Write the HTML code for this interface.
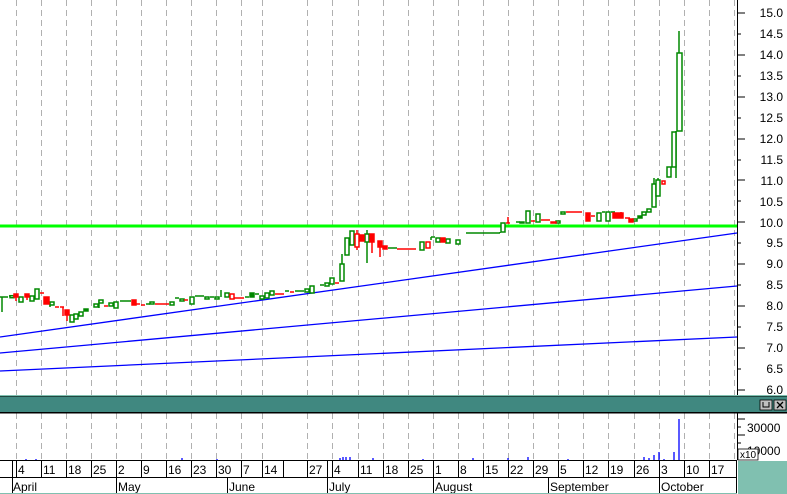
<!DOCTYPE html>
<html><head><meta charset="utf-8"><style>
html,body{margin:0;padding:0;background:#fff;width:787px;height:494px;overflow:hidden;font-family:"Liberation Sans",Arial,sans-serif}
svg{position:absolute;left:0;top:0}
text{font-family:"Liberation Sans",Arial,sans-serif}
</style></head><body>
<svg width="787" height="494" viewBox="0 0 787 494" xmlns="http://www.w3.org/2000/svg">
<rect width="787" height="494" fill="#fff"/>
<g stroke="#b0b0b0" stroke-dasharray="6,4" stroke-width="1">
<path d="M16.5 0V395M41.5 0V395M66.5 0V395M91.5 0V395M116.5 0V395M141.5 0V395M166.5 0V395M191.5 0V395M216.5 0V395M241.5 0V395M262.5 0V395M307.5 0V395M332.5 0V395M358.5 0V395M383.5 0V395M408.5 0V395M433.5 0V395M458.5 0V395M483.5 0V395M508.5 0V395M533.5 0V395M558.5 0V395M583.5 0V395M608.5 0V395M634.5 0V395M659.5 0V395M684.5 0V395M709.5 0V395M734.5 0V395"/>
<path d="M16.5 413V460M41.5 413V460M66.5 413V460M91.5 413V460M116.5 413V460M141.5 413V460M166.5 413V460M191.5 413V460M216.5 413V460M241.5 413V460M262.5 413V460M307.5 413V460M332.5 413V460M358.5 413V460M383.5 413V460M408.5 413V460M433.5 413V460M458.5 413V460M483.5 413V460M508.5 413V460M533.5 413V460M558.5 413V460M583.5 413V460M608.5 413V460M634.5 413V460M659.5 413V460M684.5 413V460M709.5 413V460M734.5 413V460"/>
</g>
<g stroke="#0000ff" stroke-width="1.3">
<line x1="0" y1="337" x2="737" y2="233"/>
<line x1="0" y1="353" x2="737" y2="286"/>
<line x1="0" y1="371" x2="737" y2="337"/>
</g>
<line x1="0" y1="226" x2="737" y2="226" stroke="#00ff00" stroke-width="3"/>
<g stroke="#008800" stroke-width="1.5" fill="#fff">
<path d="M2 297V312M0 297H8M9 296H13M38 290V299M50 304V307M99 300V308M120 301H131M146 304H150M175 298H179M195 296H200M200 296H204M210 297H214M221 290V297M245 297H249M255 294H259M285 291H289M295 291H304M320 285H324M342 254V264M388 248H397M431 237V240M431 237H435M466 233H500M500 233V232M516 222H520M602 212H605M611 212H615M676 131V178M679 31V53M654 178V184M658 178V180"/>
<rect x="10" y="295.7" width="4" height="2"/>
<rect x="19" y="297" width="4" height="5"/>
<rect x="30" y="296" width="4" height="5"/>
<rect x="35" y="289" width="4" height="10"/>
<rect x="50" y="302" width="4" height="3"/>
<rect x="70" y="315" width="4" height="7"/>
<rect x="74" y="314" width="4" height="5"/>
<rect x="79" y="312" width="4" height="4"/>
<rect x="84" y="309" width="4" height="2" fill="#008800"/>
<rect x="94" y="304" width="4" height="3"/>
<rect x="99" y="300" width="4" height="3"/>
<rect x="109" y="303" width="4" height="3"/>
<rect x="114" y="302" width="4" height="6"/>
<rect x="150" y="302" width="4" height="2"/>
<rect x="170" y="302" width="4" height="3"/>
<rect x="180" y="299" width="4" height="2"/>
<rect x="190" y="297" width="4" height="7"/>
<rect x="205" y="297" width="4" height="2"/>
<rect x="215" y="297" width="4" height="2"/>
<rect x="225" y="293" width="4" height="4"/>
<rect x="250" y="293" width="4" height="4" fill="#008800"/>
<rect x="260" y="296" width="4" height="3"/>
<rect x="265" y="293" width="4" height="5"/>
<rect x="270" y="291" width="4" height="4"/>
<rect x="305" y="289" width="4" height="3"/>
<rect x="310" y="286" width="4" height="7"/>
<rect x="325" y="283" width="4" height="3"/>
<rect x="330" y="278" width="4" height="6"/>
<rect x="340" y="264" width="4" height="17"/>
<rect x="345" y="238" width="4" height="17"/>
<rect x="350" y="231" width="4" height="14"/>
<path d="M367 230V263"/>
<rect x="365" y="234" width="4" height="8"/>
<rect x="420" y="242" width="4" height="8"/>
<rect x="436" y="238" width="4" height="4"/>
<rect x="446" y="239" width="4" height="4"/>
<rect x="456" y="240" width="4" height="4"/>
<rect x="501" y="223" width="4" height="9"/>
<rect x="520" y="222" width="4" height="1"/>
<rect x="526" y="211" width="4" height="12"/>
<rect x="536" y="214" width="4" height="8"/>
<rect x="556" y="221" width="4" height="2"/>
<rect x="561" y="212" width="4" height="2"/>
<rect x="597" y="213" width="4" height="8"/>
<rect x="606" y="212" width="4" height="9"/>
<rect x="633" y="219" width="4" height="2"/>
<rect x="638" y="216" width="4" height="2" fill="#008800"/>
<rect x="642" y="212" width="4" height="3"/>
<rect x="647" y="209" width="4" height="3"/>
<rect x="652" y="184" width="4" height="23"/>
<rect x="656" y="180" width="4" height="16"/>
<rect x="667" y="167" width="4" height="10"/>
<rect x="672" y="132" width="4" height="35"/>
<rect x="677" y="53" width="5" height="78"/>
</g>
<g stroke="#ff0000" stroke-width="1.5" fill="#ff0000">
<path d="M16 297V301M27 297V300M40 293H44M55 307H59M60 307H64M63 307V316M67 315V321M104 306H108M136 304H140M141 305H145M155 304H169M184 300H188M234 298H244M275 294H284M290 292H294M335 283H339M357 230V250M372 242V253M380 247V257M397 249H416M506 223H510M508 217V223M531 221H535M541 220H550M566 212H582M591 216H595M625 218H630M621 212V217"/>
<rect x="14" y="294" width="4" height="3"/>
<rect x="25" y="294" width="4" height="3"/>
<rect x="44" y="297" width="5" height="7"/>
<rect x="65" y="310" width="4" height="5"/>
<rect x="132" y="300" width="4" height="5"/>
<rect x="230" y="294" width="4" height="5" fill="#fff"/>
<rect x="355" y="234" width="4" height="13" fill="#fff"/>
<rect x="360" y="235" width="4" height="6"/>
<rect x="370" y="234" width="4" height="8"/>
<rect x="378" y="241" width="4" height="6"/>
<rect x="383" y="246" width="4" height="3"/>
<rect x="426" y="242" width="4" height="6" fill="#fff"/>
<rect x="441" y="238" width="4" height="4"/>
<rect x="551" y="222" width="5" height="1"/>
<rect x="586" y="213" width="4" height="8"/>
<rect x="613" y="213" width="10" height="5"/>
<rect x="629" y="219" width="4" height="3"/>
<rect x="662" y="181" width="3" height="3" fill="#fff"/>
</g>
<line x1="737.5" y1="0" x2="737.5" y2="395" stroke="#000"/>
<g stroke="#000"><path d="M737 13H745M737 34H741M737 55H745M737 76H741M737 97H745M737 118H741M737 139H745M737 160H741M737 180H745M737 201H741M737 222H745M737 243H741M737 264H745M737 285H741M737 306H745M737 327H741M737 348H745M737 369H741M737 390H745"/></g>
<g font-size="12" fill="#000" text-anchor="end">
<text x="783" y="17">15.0</text><text x="783" y="38">14.5</text><text x="783" y="59">14.0</text><text x="783" y="80">13.5</text><text x="783" y="101">13.0</text><text x="783" y="122">12.5</text><text x="783" y="143">12.0</text><text x="783" y="164">11.5</text><text x="783" y="185">11.0</text><text x="783" y="206">10.5</text><text x="783" y="227">10.0</text><text x="783" y="268">9.0</text><text x="783" y="247">9.5</text><text x="783" y="289">8.5</text><text x="783" y="310">8.0</text><text x="783" y="331">7.5</text><text x="783" y="352">7.0</text><text x="783" y="373">6.5</text><text x="783" y="394">6.0</text>
</g>
<rect x="0" y="395" width="787" height="2" fill="#80c0b0"/>
<rect x="0" y="396" width="787" height="1" fill="#204840"/>
<rect x="0" y="397" width="787" height="15" fill="#408880"/>
<rect x="0" y="412" width="787" height="1.5" fill="#000"/>
<g>
<rect x="760" y="400" width="12" height="10" fill="#c0c0c0" stroke="#000" stroke-width="0.8"/>
<path d="M763 402V407H769V402" stroke="#000" fill="none"/>
<rect x="774" y="400" width="12" height="10" fill="#c0c0c0" stroke="#000" stroke-width="0.8"/>
<path d="M777 402L783 408M783 402L777 408" stroke="#000" stroke-width="1.3"/>
</g>
<g stroke="#0000ff" stroke-width="1.3">
<path d="M26 460V459M36 460V459M182 460V458M217 460V459M340 460V458M343 460V457M346 460V457M350 460V457M373 460V458M423 460V459M473 460V458M508 460V458M528 460V457M568 460V459M644 460V457M649 460V458M654 460V455M659 460V452M664 460V459M674 460V452M679 460V419"/>
</g>
<line x1="737.5" y1="413" x2="737.5" y2="460" stroke="#000"/>
<g stroke="#000"><path d="M737 419H745M737 427H741M737 435H745M737 443H741M737 451H745"/></g>
<g font-size="12" fill="#000"><text x="747" y="432">30000</text><text x="747" y="455">10000</text></g>
<rect x="738" y="449" width="20" height="11" fill="#fff" stroke="#000" stroke-width="0.8"/>
<text x="740" y="458" font-size="10" fill="#000">x10</text>
<rect x="0" y="460" width="737" height="34" fill="#fff"/>
<line x1="0" y1="460.5" x2="737" y2="460.5" stroke="#000"/>
<line x1="0" y1="477.5" x2="737" y2="477.5" stroke="#000"/>
<g stroke="#000"><path d="M12.5 460V494M16.5 460V477M41.5 460V477M66.5 460V477M91.5 460V477M116.5 460V494M141.5 460V477M166.5 460V477M191.5 460V477M216.5 460V477M241.5 460V477M262.5 460V477M283.5 460V477M307.5 460V477M327.5 460V494M332.5 460V477M358.5 460V477M383.5 460V477M408.5 460V477M433.5 460V494M458.5 460V477M483.5 460V477M508.5 460V477M533.5 460V477M548.5 477V494M558.5 460V477M583.5 460V477M608.5 460V477M634.5 460V477M659.5 460V494M684.5 460V477M709.5 460V477M736.5 460V494M227.5 477V494"/></g>
<g font-size="12" fill="#000">
<text x="18" y="474">4</text><text x="43" y="474">11</text><text x="68" y="474">18</text><text x="93" y="474">25</text><text x="118" y="474">2</text><text x="143" y="474">9</text><text x="168" y="474">16</text><text x="193" y="474">23</text><text x="218" y="474">30</text><text x="243" y="474">7</text><text x="264" y="474">14</text><text x="309" y="474">27</text><text x="334" y="474">4</text><text x="360" y="474">11</text><text x="385" y="474">18</text><text x="410" y="474">25</text><text x="435" y="474">1</text><text x="460" y="474">8</text><text x="485" y="474">15</text><text x="510" y="474">22</text><text x="535" y="474">29</text><text x="560" y="474">5</text><text x="585" y="474">12</text><text x="610" y="474">19</text><text x="636" y="474">26</text><text x="661" y="474">3</text><text x="686" y="474">10</text><text x="711" y="474">17</text>
<text x="13" y="491">April</text><text x="118" y="491">May</text><text x="229" y="491">June</text><text x="329" y="491">July</text><text x="435" y="491">August</text><text x="550" y="491">September</text><text x="661" y="491">October</text>
</g>
<rect x="738" y="461" width="49" height="33" fill="#80c0b0"/>
<rect x="0" y="493" width="737" height="1" fill="#80c0b0"/>
</svg>
</body></html>
